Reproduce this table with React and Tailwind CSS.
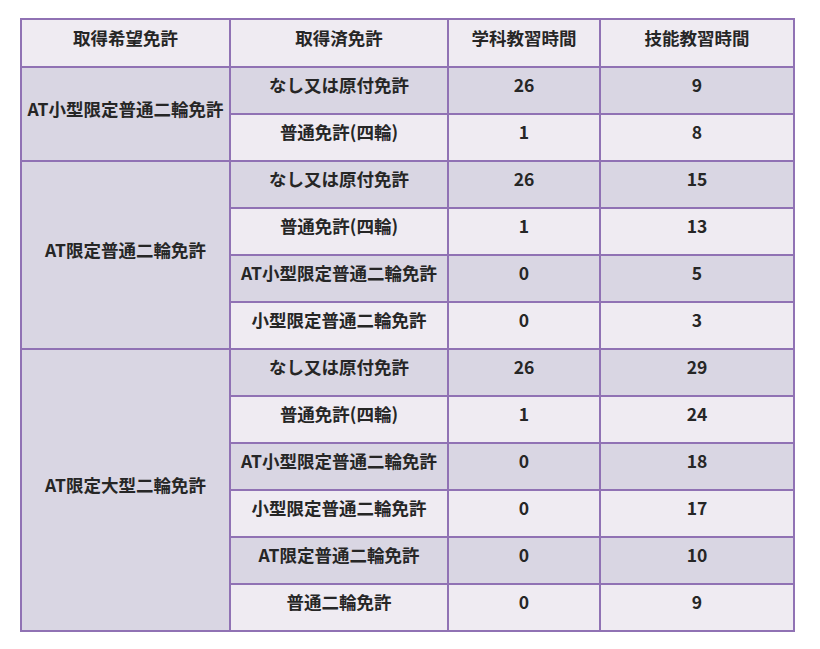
import React from "react";

const groups = [
  {
    name: "AT小型限定普通二輪免許",
    rows: [
      ["なし又は原付免許", "26", "9"],
      ["普通免許(四輪)", "1", "8"],
    ],
  },
  {
    name: "AT限定普通二輪免許",
    rows: [
      ["なし又は原付免許", "26", "15"],
      ["普通免許(四輪)", "1", "13"],
      ["AT小型限定普通二輪免許", "0", "5"],
      ["小型限定普通二輪免許", "0", "3"],
    ],
  },
  {
    name: "AT限定大型二輪免許",
    rows: [
      ["なし又は原付免許", "26", "29"],
      ["普通免許(四輪)", "1", "24"],
      ["AT小型限定普通二輪免許", "0", "18"],
      ["小型限定普通二輪免許", "0", "17"],
      ["AT限定普通二輪免許", "0", "10"],
      ["普通二輪免許", "0", "9"],
    ],
  },
];

const cell =
  "border-2 border-[#9072b4] text-center align-middle pb-[11px] px-1 whitespace-nowrap";

export default function App() {
  return (
    <div
      className="bg-white w-[820px] h-[649px] pt-[18px] pl-[20px] text-[#262626] font-bold text-[17.5px] leading-[24px]"
      style={{ fontFamily: '"Noto Sans CJK JP", "Noto Sans", sans-serif' }}
    >
      <table className="border-collapse border-2 border-[#9072b4] table-fixed w-[773px]">
        <colgroup>
          <col className="w-[209px]" />
          <col className="w-[218px]" />
          <col className="w-[152px]" />
          <col className="w-[194px]" />
        </colgroup>
        <thead>
          <tr className="h-[48px] bg-[#efebf2]">
            <th className={cell + " font-bold"}>取得希望免許</th>
            <th className={cell + " font-bold"}>取得済免許</th>
            <th className={cell + " font-bold"}>学科教習時間</th>
            <th className={cell + " font-bold"}>技能教習時間</th>
          </tr>
        </thead>
        <tbody>
          {groups.map((g) =>
            g.rows.map((r, i) => (
              <tr
                key={g.name + i}
                className={"h-[47px] " + (i % 2 === 0 ? "bg-[#d9d6e3]" : "bg-[#efebf2]")}
              >
                {i === 0 && (
                  <td rowSpan={g.rows.length} className={cell + " bg-[#d9d6e3]"}>
                    {g.name}
                  </td>
                )}
                <td className={cell}>{r[0]}</td>
                <td className={cell}>{r[1]}</td>
                <td className={cell}>{r[2]}</td>
              </tr>
            ))
          )}
        </tbody>
      </table>
    </div>
  );
}
